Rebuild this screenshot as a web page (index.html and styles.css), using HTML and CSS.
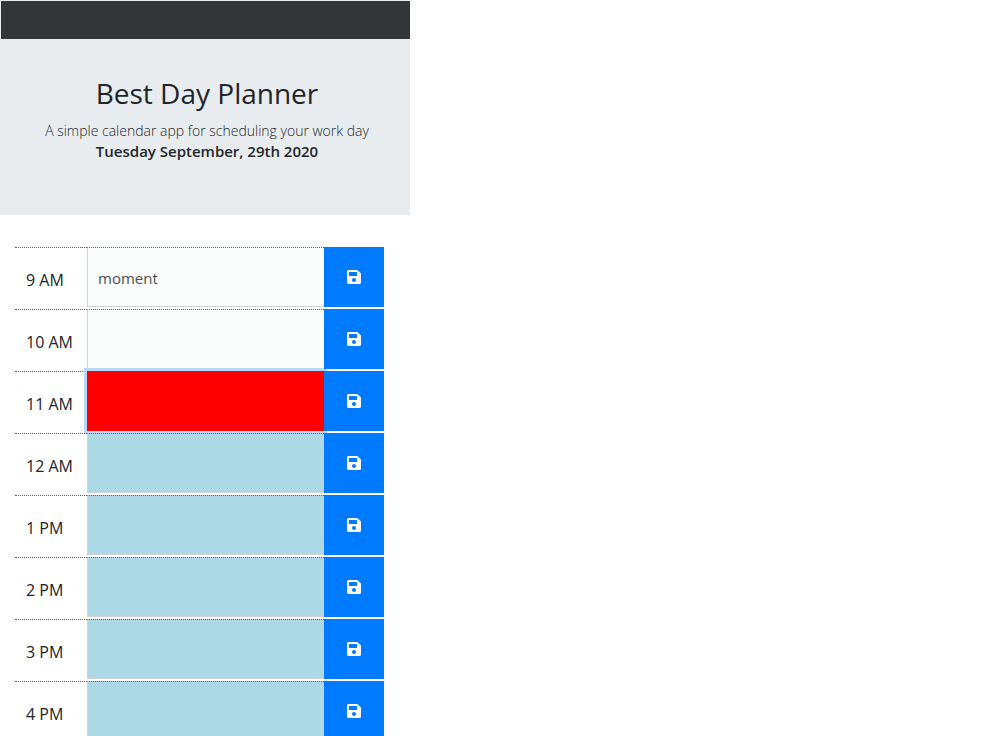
FILE: index.html
```
<!DOCTYPE html>
<html lang="en">
<head>
<meta charset="utf-8">
<meta name="viewport" content="width=device-width, initial-scale=1">
<title>Best Day Planner</title>
<link rel="stylesheet" href="styles.css">
</head>
<body>
<svg class="sprite" aria-hidden="true">
  <symbol id="save" viewBox="0 0 448 512">
    <path fill="currentColor" d="M433.9 129.9l-83.9-83.9A48 48 0 0 0 316.1 32H48C21.5 32 0 53.5 0 80v352c0 26.500 21.500 48 48 48h352c26.500 0 48-21.500 48-48V163.900a48 48 0 0 0-14.100-34zM224 416c-35.300 0-64-28.700-64-64s28.700-64 64-64 64 28.700 64 64-28.700 64-64 64zm96-304.500V212c0 6.600-5.400 12-12 12H76c-6.600 0-12-5.400-12-12V108c0-6.600 5.400-12 12-12h228.500c3.200 0 6.200 1.300 8.500 3.500l3.500 3.500A12 12 0 0 1 320 111.500z"/>
  </symbol>
</svg>
<div class="planner">
  <nav class="navbar"></nav>
  <header class="hero">
    <h1 class="title">Best Day Planner</h1>
    <p class="lead">A simple calendar app for scheduling your work day</p>
    <p class="date">Tuesday September, 29th 2020</p>
  </header>
  <main class="schedule">
    <div class="row"><label class="hour" for="h9">9 AM</label><textarea class="entry past" id="h9">moment</textarea><button class="save" aria-label="Save 9 AM"><svg class="icon"><use href="#save"/></svg></button></div>
    <div class="row"><label class="hour" for="h10">10 AM</label><textarea class="entry past" id="h10"></textarea><button class="save" aria-label="Save 10 AM"><svg class="icon"><use href="#save"/></svg></button></div>
    <div class="row"><label class="hour" for="h11">11 AM</label><textarea class="entry present" id="h11"></textarea><button class="save" aria-label="Save 11 AM"><svg class="icon"><use href="#save"/></svg></button></div>
    <div class="row"><label class="hour" for="h12">12 AM</label><textarea class="entry future" id="h12"></textarea><button class="save" aria-label="Save 12 AM"><svg class="icon"><use href="#save"/></svg></button></div>
    <div class="row"><label class="hour" for="h13">1 PM</label><textarea class="entry future" id="h13"></textarea><button class="save" aria-label="Save 1 PM"><svg class="icon"><use href="#save"/></svg></button></div>
    <div class="row"><label class="hour" for="h14">2 PM</label><textarea class="entry future" id="h14"></textarea><button class="save" aria-label="Save 2 PM"><svg class="icon"><use href="#save"/></svg></button></div>
    <div class="row"><label class="hour" for="h15">3 PM</label><textarea class="entry future" id="h15"></textarea><button class="save" aria-label="Save 3 PM"><svg class="icon"><use href="#save"/></svg></button></div>
    <div class="row"><label class="hour" for="h16">4 PM</label><textarea class="entry future" id="h16"></textarea><button class="save" aria-label="Save 4 PM"><svg class="icon"><use href="#save"/></svg></button></div>
  </main>
</div>
</body>
</html>
```

FILE: styles.css
```
* { box-sizing: border-box; }
html { scrollbar-width: none; }
body {
  margin: 0;
  background: #fff;
  color: #212529;
  font: 15px/21px "Open Sans", "Noto Sans", sans-serif;
}
.sprite { position: absolute; width: 0; height: 0; }
.planner { max-width: 410px; }
.navbar {
  height: 39px;
  background: #343536;
  border-top: 1px solid #e9ecef;
  border-left: 1px solid #e9ecef;
}
.hero {
  padding: 36px 14px 53px 18px;
  background: #e9ecef;
  text-align: center;
}
.title {
  margin: 0 0 8px;
  font-size: 28px;
  font-weight: 400;
  line-height: 37px;
}
.lead, .date { margin: 0; }
.lead { font-size: 14px; font-weight: 300; }
.date { font-size: 15px; font-weight: 600; }
.schedule {
  display: grid;
  gap: 2px;
  padding: 32px 26px 0 15px;
}
.row {
  display: grid;
  grid-template-columns: 72px 1fr 60px;
  height: 60px;
}
.hour {
  padding: 22px 0 0 11px;
  border-top: 1px dotted #0078c0;
  font-size: 16px;
}
.entry {
  width: 100%;
  height: 100%;
  margin: 0;
  padding: 20px 10px 0;
  border: 1px solid #ced4da;
  border-top: 1px dotted #0078c0;
  border-right: 0;
  border-radius: 0;
  outline: 0;
  resize: none;
  overflow: hidden;
  color: #495057;
  font: inherit;
}
.past { background: #fafbfb; }
.future { background: #add8e6; }
.present {
  background: #f00;
  border-color: #f00;
  border-top-style: solid;
  box-shadow: 0 0 0 3px #b8d8fb;
}
.save {
  display: grid;
  place-items: center;
  padding: 0;
  border: 0;
  z-index: 1;
  background: #007bff;
  color: #fff;
}
.icon { width: 14px; height: 16px; }
```
